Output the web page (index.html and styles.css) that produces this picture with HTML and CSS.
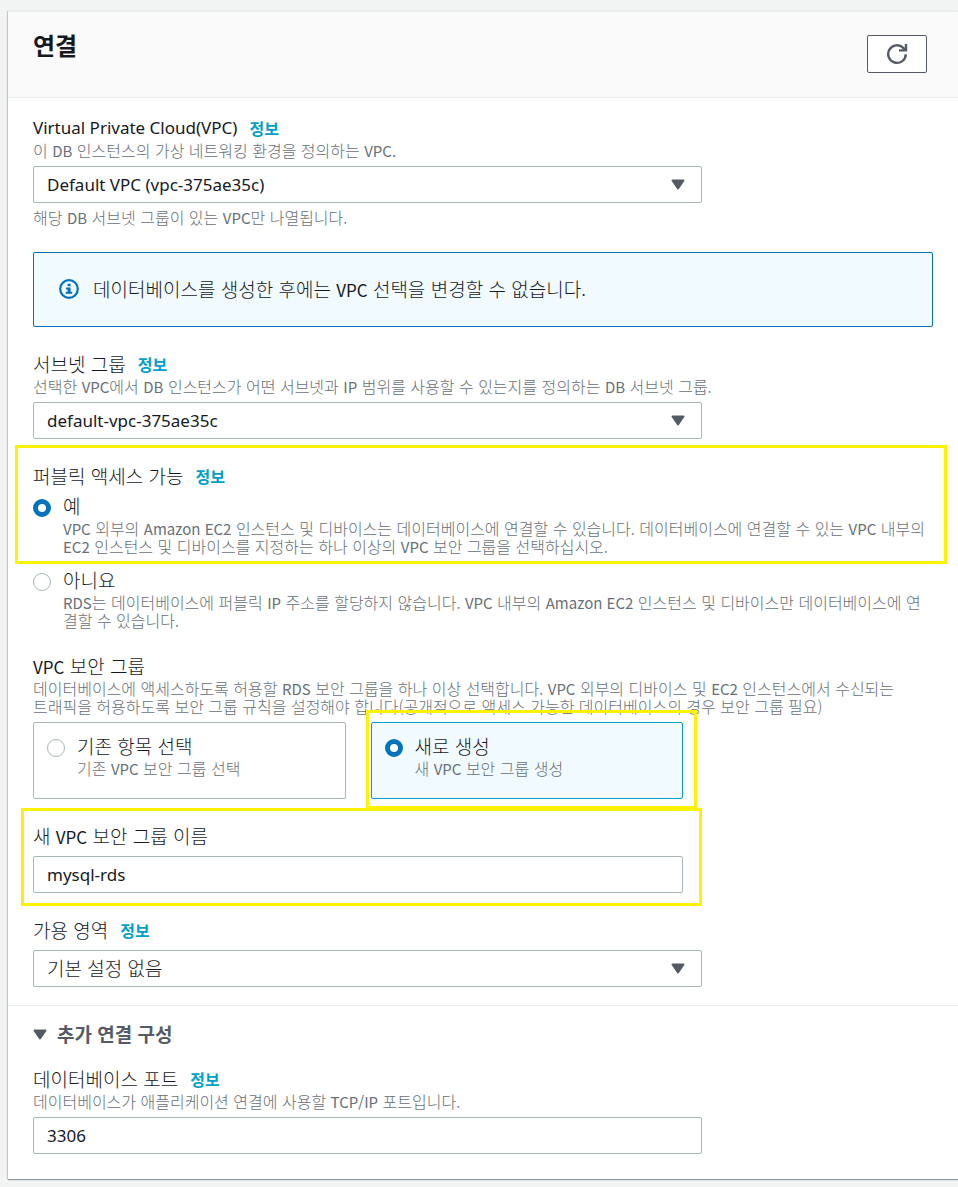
FILE: index.html
```html
<!DOCTYPE html>
<html lang="ko">

<head>
    <meta charset="UTF-8">
    <meta name="viewport" content="width=device-width, initial-scale=1.0">
    <title>연결</title>
    <link rel="stylesheet" href="styles.css">
</head>

<body>
    <form class="card">
        <header class="card-header">
            <h2>연결</h2>
            <button type="button" class="refresh" aria-label="새로 고침">
                <svg width="22" height="22" viewBox="0 0 22 22">
                    <path d="M19.8 11.2a8.8 8.8 0 1 1-2.6-6.4l2 2" fill="none" stroke="currentColor" stroke-width="2.4" />
                    <path d="M20 1v6.4h-7" fill="none" stroke="currentColor" stroke-width="2.4" />
                </svg>
            </button>
        </header>

        <div class="card-body">
            <div class="field">
                <div class="label-row">
                    <label class="label latin" for="vpc">Virtual Private Cloud(VPC)</label>
                    <a class="info" href="#">정보</a>
                </div>
                <p class="hint">이 <span class="en">DB</span> 인스턴스의 가상 네트워킹 환경을 정의하는 <span class="en">VPC.</span></p>
                <div class="select">
                    <select id="vpc" class="control latin">
                        <option>Default VPC (vpc-375ae35c)</option>
                    </select>
                    <svg class="caret" width="14" height="11" viewBox="0 0 14 11"><path d="M1.5 1.5h11L7 9.5z" /></svg>
                </div>
                <p class="hint constraint">해당 <span class="en">DB</span> 서브넷 그룹이 있는 <span class="en">VPC</span>만 나열됩니다.</p>
            </div>

            <div class="alert">
                <svg width="20" height="20" viewBox="0 0 20 20">
                    <circle cx="10" cy="10" r="8.8" fill="none" stroke="currentColor" stroke-width="2.2" />
                    <path d="M8.6 4.8h3v2.4h-3zM7 8.4h4.6v4.4h1.6v2H6.8v-2h1.8v-2.4H7z" fill="currentColor" />
                </svg>
                <p>데이터베이스를 생성한 후에는 <span class="en">VPC</span> 선택을 변경할 수 없습니다.</p>
            </div>

            <div class="field">
                <div class="label-row">
                    <label class="label" for="subnet">서브넷 그룹</label>
                    <a class="info" href="#">정보</a>
                </div>
                <p class="hint">선택한 <span class="en">VPC</span>에서 <span class="en">DB</span> 인스턴스가 어떤 서브넷과 <span class="en">IP</span> 범위를 사용할 수 있는지를 정의하는 <span class="en">DB</span> 서브넷 그룹.</p>
                <div class="select">
                    <select id="subnet" class="control latin">
                        <option>default-vpc-375ae35c</option>
                    </select>
                    <svg class="caret" width="14" height="11" viewBox="0 0 14 11"><path d="M1.5 1.5h11L7 9.5z" /></svg>
                </div>
            </div>

            <div class="field" role="radiogroup" aria-labelledby="public-label">
                <div class="marked marked-public">
                    <div class="label-row">
                        <span class="label" id="public-label">퍼블릭 액세스 가능</span>
                        <a class="info" href="#">정보</a>
                    </div>
                    <div class="option">
                        <input type="radio" name="public" id="public-yes" checked>
                        <label for="public-yes">
                            <span class="label">예</span>
                            <span class="hint"><span class="en">VPC</span> 외부의 <span class="en">Amazon EC2</span> 인스턴스 및 디바이스는 데이터베이스에 연결할 수 있습니다. 데이터베이스에 연결할 수 있는 <span class="en">VPC</span> 내부의<br><span class="en">EC2</span> 인스턴스 및 디바이스를 지정하는 하나 이상의 <span class="en">VPC</span> 보안 그룹을 선택하십시오.</span>
                        </label>
                    </div>
                </div>
                <div class="option option-next">
                    <input type="radio" name="public" id="public-no">
                    <label for="public-no">
                        <span class="label">아니요</span>
                        <span class="hint"><span class="en">RDS</span>는 데이터베이스에 퍼블릭 <span class="en">IP</span> 주소를 할당하지 않습니다. <span class="en">VPC</span> 내부의 <span class="en">Amazon EC2</span> 인스턴스 및 디바이스만 데이터베이스에 연<br>결할 수 있습니다.</span>
                    </label>
                </div>
            </div>

            <div class="field" role="radiogroup" aria-labelledby="group-label">
                <div class="label-row">
                    <span class="label" id="group-label"><span class="en">VPC</span> 보안 그룹</span>
                </div>
                <p class="hint">데이터베이스에 액세스하도록 허용할 <span class="en">RDS</span> 보안 그룹을 하나 이상 선택합니다. <span class="en">VPC</span> 외부의 디바이스 및 <span class="en">EC2</span> 인스턴스에서 수신되는<br>트래픽을 허용하도록 보안 그룹 규칙을 설정해야 합니다(공개적으로 액세스 가능한 데이터베이스의 경우 보안 그룹 필요)</p>
                <div class="tiles">
                    <div class="tile option">
                        <input type="radio" name="group" id="group-existing">
                        <label for="group-existing">
                            <span class="label">기존 항목 선택</span>
                            <span class="hint">기존 <span class="en">VPC</span> 보안 그룹 선택</span>
                        </label>
                    </div>
                    <div class="marked marked-tile">
                        <div class="tile option selected">
                            <input type="radio" name="group" id="group-new" checked>
                            <label for="group-new">
                                <span class="label">새로 생성</span>
                                <span class="hint">새 <span class="en">VPC</span> 보안 그룹 생성</span>
                            </label>
                        </div>
                    </div>
                </div>
            </div>

            <div class="field narrow marked marked-name">
                <div class="label-row">
                    <label class="label" for="group-name">새 <span class="en">VPC</span> 보안 그룹 이름</label>
                </div>
                <input type="text" id="group-name" class="control latin" value="mysql-rds">
            </div>

            <div class="field">
                <div class="label-row">
                    <label class="label" for="zone">가용 영역</label>
                    <a class="info" href="#">정보</a>
                </div>
                <div class="select">
                    <select id="zone" class="control korean">
                        <option>기본 설정 없음</option>
                    </select>
                    <svg class="caret" width="14" height="11" viewBox="0 0 14 11"><path d="M1.5 1.5h11L7 9.5z" /></svg>
                </div>
            </div>
        </div>

        <section class="card-extra">
            <button type="button" class="expander" aria-expanded="true">
                <svg class="arrow" width="14" height="11" viewBox="0 0 14 11"><path d="M1.5 1.5h11L7 9.5z" /></svg>
                추가 연결 구성
            </button>
            <div class="field">
                <div class="label-row">
                    <label class="label" for="port">데이터베이스 포트</label>
                    <a class="info" href="#">정보</a>
                </div>
                <p class="hint">데이터베이스가 애플리케이션 연결에 사용할 <span class="en">TCP/IP</span> 포트입니다.</p>
                <input type="text" id="port" class="control latin" value="3306">
            </div>
        </section>
    </form>
</body>

</html>
```
FILE: styles.css
```css
* {
    box-sizing: border-box;
}

body {
    margin: 0;
    padding: 11px 0 8px 8px;
    background-color: #f2f3f3;
    color: #16191f;
    font-family: "Noto Sans CJK KR", sans-serif;
    font-size: 19px;
    font-weight: 300;
    line-height: 24px;
}

h2,
p {
    margin: 0;
}

.card {
    background-color: #fff;
    border-top: 1px solid #eaeded;
    box-shadow: 0 1px 1px rgba(0, 28, 36, 0.4), -1px 0 1px rgba(0, 28, 36, 0.15);
}

.card-header {
    display: flex;
    justify-content: space-between;
    align-items: flex-start;
    padding: 23px 31px 24px 25px;
    background-color: #fafafa;
    border-bottom: 1px solid #eaeded;
}

h2 {
    font-size: 24px;
    line-height: 20px;
    font-weight: 700;
}

.refresh {
    display: flex;
    align-items: center;
    justify-content: center;
    width: 60px;
    height: 38px;
    padding: 0;
    background-color: #fff;
    border: 1px solid #545b64;
    border-radius: 2px;
    color: #545b64;
}

.card-body {
    display: flex;
    flex-direction: column;
    gap: 25px;
    padding: 18px 25px;
}

.label-row {
    display: flex;
    align-items: center;
    gap: 12px;
}

.latin {
    font-family: "Noto Sans", sans-serif;
    font-size: 17px;
    font-weight: 400;
}

/* latin words set inside korean text */
.en {
    font-size: 17px;
    font-weight: 400;
    line-height: 1;
}

.hint .en {
    font-size: 15px;
}

.info {
    color: #00a1c9;
    font-size: 16px;
    font-weight: 700;
    text-decoration: none;
}

.hint {
    display: block;
    margin-top: 1px;
    color: #687078;
    font-size: 16px;
    line-height: 18px;
}

.constraint {
    margin-top: 5px;
}

.control {
    display: block;
    width: 100%;
    max-width: 669px;
    height: 37px;
    padding: 0 13px;
    background-color: #fff;
    border: 1px solid #aab7b8;
    border-radius: 2px;
    color: #16191f;
    appearance: none;
}

.korean {
    padding-bottom: 2px;
    font-family: inherit;
    font-size: 19px;
    font-weight: inherit;
}

.select {
    position: relative;
    max-width: 669px;
}

.hint + .select,
.hint + .control,
.hint + .tiles {
    margin-top: 7px;
}

.label-row + .select,
.label-row + .control {
    margin-top: 8px;
}

.caret {
    position: absolute;
    top: 13px;
    right: 17px;
    pointer-events: none;
}

.caret,
.arrow {
    fill: #545b64;
    stroke: #545b64;
    stroke-width: 2;
    stroke-linejoin: round;
}

.alert {
    display: flex;
    align-items: center;
    gap: 14px;
    padding: 24px 25px 25px;
    background-color: #f1faff;
    border: 1px solid #0073bb;
    border-radius: 2px;
}

.constraint {
    margin-bottom: 1px;
}

.alert svg {
    color: #0073bb;
}

.option {
    display: flex;
    align-items: flex-start;
    gap: 12px;
    margin-top: 6px;
}

.option-next {
    margin-top: 13px;
}

.option .label {
    display: block;
}

input[type="radio"] {
    flex: none;
    width: 18px;
    height: 18px;
    margin: 5px 0 0;
    background-color: #fff;
    border: 1px solid #aab7b8;
    border-radius: 50%;
    appearance: none;
}

input[type="radio"]:checked {
    border: 5px solid #0073bb;
}

.tiles {
    display: grid;
    grid-template-columns: 1fr 1fr;
    gap: 25px;
    max-width: 650px;
}

.tile {
    height: 77px;
    margin: 0;
    padding: 11px 13px;
    border: 1px solid #aab7b8;
    border-radius: 2px;
}

.selected {
    background-color: #f1faff;
    border-color: #00a1c9;
}

.narrow {
    max-width: 650px;
}

/* yellow callout frames */
.marked {
    position: relative;
}

.marked::after {
    content: "";
    position: absolute;
    border: 3px solid #fff200;
    pointer-events: none;
}

.marked-public::after {
    inset: -19px -14px -9px -18px;
}

.marked-tile::after {
    inset: -12px -14px -10px -5px;
}

.marked-name::after {
    inset: -16px -19px -13px -12px;
}

.card-extra {
    padding: 16px 25px 25px;
    border-top: 1px solid #eaeded;
}

.expander {
    display: flex;
    align-items: center;
    gap: 10px;
    margin: 0 0 21px;
    padding: 0;
    background: none;
    border: 0;
    color: #545b64;
    font: inherit;
    font-weight: 700;
}
```
